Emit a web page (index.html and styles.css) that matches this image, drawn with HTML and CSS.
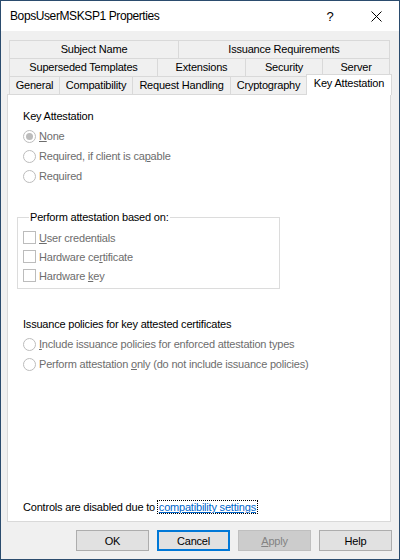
FILE: index.html
```
<!DOCTYPE html>
<html>
<head>
<meta charset="utf-8">
<link rel="stylesheet" href="styles.css">
</head>
<body>
<div class="window">
  <div class="titlebar">
    <span class="title">BopsUserMSKSP1 Properties</span>
    <span class="tb-btn">?</span>
    <span class="tb-btn"><svg width="11" height="11" viewBox="0 0 11 11"><path d="M0.5 0.5 L10.5 10.5 M10.5 0.5 L0.5 10.5" stroke="#000" stroke-width="1" fill="none"/></svg></span>
  </div>
  <div class="body">
    <div class="tabs">
      <div class="row">
        <div class="tab w-subject">Subject Name</div>
        <div class="tab w-issreq last">Issuance Requirements</div>
      </div>
      <div class="row">
        <div class="tab w-superseded">Superseded Templates</div>
        <div class="tab w-ext">Extensions</div>
        <div class="tab w-sec">Security</div>
        <div class="tab w-server last">Server</div>
      </div>
      <div class="row">
        <div class="tab w-general">General</div>
        <div class="tab w-compat">Compatibility</div>
        <div class="tab w-request">Request Handling</div>
        <div class="tab w-crypto">Cryptography</div>
        <div class="tab w-key sel">Key Attestation</div>
      </div>
    </div>
    <div class="panel">
      <div class="heading">Key Attestation</div>
      <div class="opts">
        <div class="opt"><svg class="radio" width="13" height="13" viewBox="0 0 13 13"><circle cx="6.5" cy="6.5" r="6" fill="#fff" stroke="#bcbcbc"/><circle cx="6.5" cy="6.5" r="3.5" fill="#bcbcbc"/></svg><span class="lbl"><u>N</u>one</span></div>
        <div class="opt"><svg class="radio" width="13" height="13" viewBox="0 0 13 13"><circle cx="6.5" cy="6.5" r="6" fill="#fff" stroke="#bcbcbc"/></svg><span class="lbl">Required, if client is ca<u>p</u>able</span></div>
        <div class="opt"><svg class="radio" width="13" height="13" viewBox="0 0 13 13"><circle cx="6.5" cy="6.5" r="6" fill="#fff" stroke="#bcbcbc"/></svg><span class="lbl">Required</span></div>
      </div>
      <fieldset class="group">
        <legend>Perform attestation based on:</legend>
        <div class="chk"><span class="box"></span><span class="lbl"><u>U</u>ser credentials</span></div>
        <div class="chk"><span class="box"></span><span class="lbl">Hardware ce<u>r</u>tificate</span></div>
        <div class="chk"><span class="box"></span><span class="lbl">Hardware <u>k</u>ey</span></div>
      </fieldset>
      <div class="heading heading2">Issuance policies for key attested certificates</div>
      <div class="opts opts2">
        <div class="opt"><svg class="radio" width="13" height="13" viewBox="0 0 13 13"><circle cx="6.5" cy="6.5" r="6" fill="#fff" stroke="#bcbcbc"/></svg><span class="lbl"><u>I</u>nclude issuance policies for enforced attestation types</span></div>
        <div class="opt"><svg class="radio" width="13" height="13" viewBox="0 0 13 13"><circle cx="6.5" cy="6.5" r="6" fill="#fff" stroke="#bcbcbc"/></svg><span class="lbl">Perform attestation <u>o</u>nly (do not include issuance policies)</span></div>
      </div>
      <div class="footer">Controls are disabled due to <a class="link" href="#">compatibility settings</a></div>
    </div>
    <div class="buttons">
      <button class="btn">OK</button>
      <button class="btn default">Cancel</button>
      <button class="btn disabled"><u>A</u>pply</button>
      <button class="btn">Help</button>
    </div>
  </div>
</div>
</body>
</html>
```
FILE: styles.css
```
* { box-sizing: border-box; }
html, body { margin: 0; padding: 0; }
body {
  width: 400px;
  height: 560px;
  font-family: "Liberation Sans", Arial, sans-serif;
  font-size: 11px;
  letter-spacing: -0.2px;
  color: #000;
  overflow: hidden;
}
.window {
  width: 400px;
  height: 560px;
  border: 1px solid #2b4c6e;
  background: #f0f0f0;
  display: flex;
  flex-direction: column;
}
.titlebar {
  height: 30px;
  flex: none;
  background: #fff;
  display: flex;
  align-items: center;
  padding-left: 9px;
  font-size: 12px;
  letter-spacing: -0.4px;
}
.title { flex: 1; }
.tb-btn {
  width: 46px;
  height: 30px;
  display: flex;
  align-items: center;
  justify-content: center;
  font-size: 13px;
}
.body {
  flex: 1;
  padding: 9px 0 0 6px;
  display: flex;
  flex-direction: column;
}
.tabs { margin-left: 2px; width: 381px; }
.row { display: flex; height: 18px; }
.tab {
  height: 18px;
  flex: none;
  border-top: 1px solid #d9d9d9;
  border-left: 1px solid #d9d9d9;
  background: #f0f0f0;
  display: flex;
  align-items: center;
  justify-content: center;
  padding-bottom: 1px;
  white-space: nowrap;
}
.tab.last { border-right: 1px solid #d9d9d9; }
.w-subject { width: 169px; }
.w-issreq { width: 212px; }
.w-superseded { width: 148px; }
.w-ext { width: 88px; }
.w-sec { width: 77px; }
.w-server { width: 68px; }
.w-general { width: 50px; }
.w-compat { width: 73px; }
.w-request { width: 98px; }
.w-crypto { width: 76px; }
.w-key { width: 86px; }
.tab.sel {
  background: #fff;
  height: 21px;
  margin-top: -2px;
  border-right: 1px solid #d9d9d9;
  position: relative;
  z-index: 1;
  padding-bottom: 4px;
}
.panel {
  width: 384px;
  height: 428px;
  background: #fff;
  border: 1px solid #d9d9d9;
  padding: 13px 15px 6px 15px;
  display: flex;
  flex-direction: column;
}
.heading { line-height: 16px; height: 16px; }
.opts { margin-top: 2px; }
.opt {
  height: 20px;
  display: flex;
  align-items: center;
  gap: 3px;
}
.radio { flex: none; display: block; }
.lbl { color: #6d6d6d; white-space: nowrap; }
.group {
  margin: 24px 0 0 -6px;
  width: 263px;
  border: 1px solid #dcdcdc;
  padding: 4px 0 3px 5px;
  min-width: 0;
}
.group legend {
  margin-left: 6px;
  padding: 0 1px;
  line-height: 14px;
  font-size: 11px;
  font-weight: normal;
}
.chk {
  height: 19px;
  display: flex;
  align-items: center;
  gap: 3px;
}
.box {
  width: 13px;
  height: 13px;
  border: 1px solid #bcbcbc;
  background: #fff;
  flex: none;
}
.heading2 { margin-top: 27px; }
.footer {
  margin-top: auto;
  line-height: 16px;
  white-space: nowrap;
}
.link {
  color: #0066cc;
  text-decoration: underline;
  outline: 1px dotted #000;
  padding: 0 1px;
}
.buttons {
  margin-top: 8px;
  display: flex;
  justify-content: flex-end;
  gap: 8px;
  width: 385px;
}
.btn {
  width: 73px;
  height: 21px;
  border: 1px solid #adadad;
  background: #e1e1e1;
  font-family: "Liberation Sans", Arial, sans-serif;
  font-size: 11px;
  letter-spacing: -0.2px;
  color: #000;
  padding: 0;
  margin: 0;
}
.btn.default { border: 2px solid #0078d7; }
.btn.disabled { background: #cccccc; border-color: #bfbfbf; color: #838383; }
```
